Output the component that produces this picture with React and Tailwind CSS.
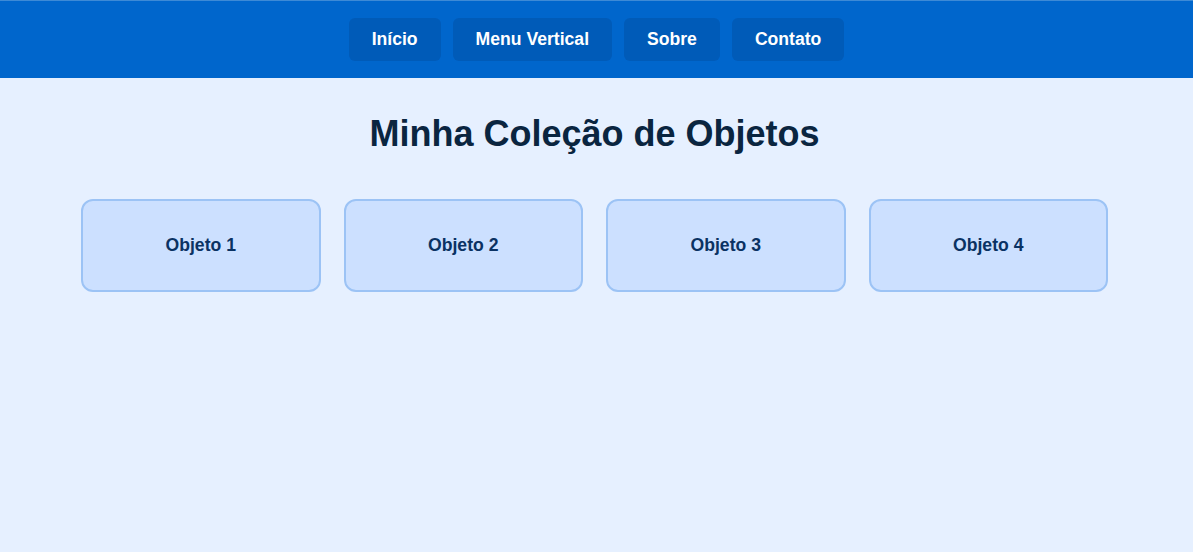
export default function App() {
  const links = ['Início', 'Menu Vertical', 'Sobre', 'Contato'];
  const objetos = ['Objeto 1', 'Objeto 2', 'Objeto 3', 'Objeto 4'];

  return (
    <div
      className="min-h-screen bg-[#e6f0ff]"
      style={{ fontFamily: '"Liberation Sans", Arial, sans-serif' }}
    >
      {/* Top nav */}
      <nav className="bg-[#0066cc] border-t border-[#3d8ad6] pt-[17px] pb-[17px] flex justify-center gap-3">
        {links.map((l) => (
          <a
            key={l}
            href="#"
            className="bg-[#005bb8] text-white font-bold text-[17.6px] leading-[19px] px-[23px] py-3 rounded-md"
          >
            {l}
          </a>
        ))}
      </nav>

      <main className="pl-[81px] pr-[85px] pt-[35px]">
        <h1 className="text-center text-[36px] leading-[42px] font-bold text-[#0a2540]">
          Minha Coleção de Objetos
        </h1>

        <div className="grid grid-cols-4 gap-[23px] mt-[44px]">
          {objetos.map((o) => (
            <div
              key={o}
              className="h-[93px] flex items-center justify-center rounded-xl border-2 border-[#9cc3f5] bg-[#cce0ff] text-[#0a3263] font-bold text-[17.6px]"
            >
              {o}
            </div>
          ))}
        </div>
      </main>
    </div>
  );
}
